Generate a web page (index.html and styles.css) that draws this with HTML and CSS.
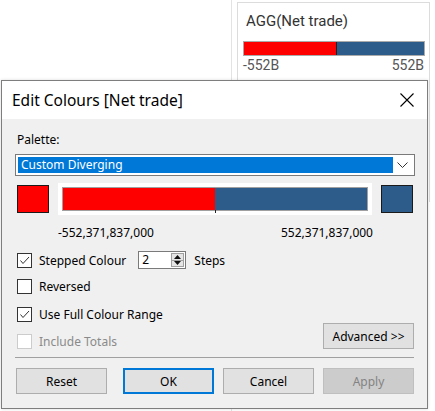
FILE: index.html
```html
<!DOCTYPE html>
<html>
<head>
<meta charset="utf-8">
<link rel="stylesheet" href="styles.css">
</head>
<body>
<div class="stage">
  <div class="left-pane"></div>
  <div class="right-pane">
    <div class="legend-card">
      <div class="legend-title">AGG(Net trade)</div>
      <div class="legend-bar"><div class="lb-red"></div><div class="lb-blue"></div></div>
      <div class="legend-labels"><span>-552B</span><span>552B</span></div>
    </div>
  </div>

  <div class="dialog">
    <div class="titlebar">
      <span class="title">Edit Colours [Net trade]</span>
      <svg class="close" width="14" height="14" viewBox="0 0 14 14"><path d="M0.5 0.5 L13.5 13.5 M13.5 0.5 L0.5 13.5" stroke="#000" stroke-width="1.1" fill="none"/></svg>
    </div>
    <div class="body">
      <div class="label-row">Palette:</div>
      <div class="select">
        <div class="select-sel">Custom Diverging</div>
        <svg class="chev" width="11" height="6" viewBox="0 0 11 6"><path d="M0.5 0.5 L5.5 5.5 L10.5 0.5" stroke="#333" stroke-width="1" fill="none"/></svg>
      </div>
      <div class="swatch-row">
        <div class="swatch red"></div>
        <div class="bar-frame">
          <div class="bar"><div class="bar-red"></div><div class="bar-blue"></div><div class="tick"></div></div>
        </div>
        <div class="swatch blue"></div>
      </div>
      <div class="range-row"><span>-552,371,837,000</span><span>552,371,837,000</span></div>
      <div class="opt-row first">
        <span class="cb checked"><svg width="13" height="13" viewBox="0 0 13 13"><path d="M2.5 6.5 L5 9.5 L11 3" stroke="#333" stroke-width="1" fill="none"/></svg></span>
        <span class="opt-text">Stepped Colour</span>
        <span class="spin"><span class="spin-val">2</span><span class="spin-btns"><span class="sb up"><svg width="7" height="4" viewBox="0 0 7 4"><path d="M0 4 L3.5 0 L7 4 Z" fill="#111"/></svg></span><span class="sb down"><svg width="7" height="4" viewBox="0 0 7 4"><path d="M0 0 L3.5 4 L7 0 Z" fill="#111"/></svg></span></span></span>
        <span class="opt-text steps">Steps</span>
      </div>
      <div class="opt-row">
        <span class="cb"></span>
        <span class="opt-text">Reversed</span>
      </div>
      <div class="opt-row full">
        <span class="cb checked"><svg width="13" height="13" viewBox="0 0 13 13"><path d="M2.5 6.5 L5 9.5 L11 3" stroke="#333" stroke-width="1" fill="none"/></svg></span>
        <span class="opt-text">Use Full Colour Range</span>
      </div>
      <div class="opt-row last">
        <span class="cb disabled"></span>
        <span class="opt-text dim">Include Totals</span>
        <span class="btn advanced">Advanced &gt;&gt;</span>
      </div>
      <div class="sep"></div>
      <div class="btn-row">
        <span class="btn">Reset</span>
        <span class="btn primary">OK</span>
        <span class="btn">Cancel</span>
        <span class="btn off">Apply</span>
      </div>
    </div>
  </div>
</div>
</body>
</html>
```
FILE: styles.css
```css
* { box-sizing: border-box; }
html, body { margin: 0; padding: 0; }
body { width: 435px; height: 411px; overflow: hidden; background: #fff; font-family: "Noto Sans", "Open Sans", sans-serif; }
.stage { position: relative; width: 435px; height: 411px; display: flex; }
.left-pane { width: 232px; height: 411px; border-right: 1px solid #e3e3e3; background: #fff; }
.right-pane { flex: 1; padding: 2px 5px 0 5px; }
.legend-card { height: 200px; border: 1px solid #dcdcdc; border-bottom: none; padding: 7px 4px 0 5px; }
.legend-title { font-family: Roboto, "Noto Sans", sans-serif; font-size: 15px; color: #333; height: 22px; line-height: 22px; padding-left: 3px; }
.legend-bar { margin-top: 9px; height: 15px; display: flex; border: 1px solid #aaa; }
.lb-red { width: 92px; background: #ff0000; }
.lb-blue { flex: 1; background: #2d5c8a; border-left: 1px solid #222; }
.legend-labels { display: flex; justify-content: space-between; font-family: Roboto, "Noto Sans", sans-serif; font-size: 14px; color: #555; line-height: 18px; padding-right: 1px; }

.dialog { position: absolute; left: 1px; top: 80px; width: 427px; height: 329px; border: 1px solid #7e7e7e; background: #f0f0f0; box-shadow: 0 0 3px rgba(0,0,0,0.15); }
.titlebar { height: 38px; background: #fff; display: flex; align-items: center; justify-content: space-between; padding: 0 13px 0 10px; }
.title { font-size: 15.5px; color: #000; }
.close { display: block; }
.body { padding: 12px 13px 0 13px; font-size: 12px; color: #000; }
.label-row { height: 17px; line-height: 17px; padding-left: 2px; }
.select { margin-top: 6px; height: 22px; border: 1px solid #7a7a7a; background: #fff; display: flex; align-items: center; padding: 2px; width: 400px; }
.select-sel { flex: 1; height: 16px; background: #0078d7; color: #fff; line-height: 16px; padding-left: 3px; margin-right: 4px; }
.chev { margin: 0 4px 0 0; }
.swatch-row { margin-top: 7px; height: 32px; display: flex; align-items: center; }
.swatch { width: 32px; height: 28px; border: 1px solid #1a1a1a; margin-left: 2px; }
.swatch.red { background: #ff0000; }
.swatch.blue { background: #2d5c8a; margin-left: 9px; }
.bar-frame { margin-left: 9px; width: 314px; height: 32px; background: #fff; padding: 4px; }
.bar { position: relative; height: 24px; display: flex; border: 1px solid #a0a0a0; }
.bar-red { width: 152px; background: #ff0000; }
.bar-blue { flex: 1; background: #2d5c8a; }
.tick { position: absolute; left: 152px; bottom: -3px; width: 1px; height: 3px; background: #222; }
.range-row { margin-top: 9px; height: 17px; line-height: 17px; display: flex; justify-content: space-between; width: 358px; padding-left: 43px; }
.opt-row { display: flex; align-items: center; height: 26px; }
.opt-row.first { margin-top: 6px; }
.opt-row.full { margin-top: 2px; }
.cb { width: 15px; height: 15px; border: 1px solid #333; background: #fff; display: flex; align-items: center; justify-content: center; margin-left: 2px; }
.cb.disabled { border-color: #cccccc; }
.opt-text { margin-left: 7px; }
.opt-text.dim { color: #8a8a8a; }
.spin { margin-left: 12px; width: 48px; height: 18px; border: 1px solid #7a7a7a; background: #fff; display: flex; }
.spin-val { flex: 1; line-height: 16px; padding-left: 3px; }
.spin-btns { width: 14px; display: flex; flex-direction: column; padding: 1px 1px 1px 0; }
.sb { flex: 1; background: #e6e6e6; border: 1px solid #a0a0a0; display: flex; align-items: center; justify-content: center; }
.sb.up { border-bottom: none; }
.steps { margin-left: 8px; }
.opt-row.last { height: 28px; }
.btn { display: flex; align-items: center; justify-content: center; width: 91px; height: 26px; background: #e1e1e1; border: 1px solid #adadad; color: #000; }
.advanced { margin-left: auto; align-self: flex-start; margin-top: -4px; }
.sep { margin-top: 2px; width: 399px; height: 1px; background: #a0a0a0; }
.btn-row { margin-top: 10px; display: flex; padding-left: 1px; }
.btn-row .btn:nth-child(2) { margin-left: 16px; }
.btn-row .btn:nth-child(3) { margin-left: 9px; }
.btn-row .btn:nth-child(4) { margin-left: 9px; }
.btn.primary { border: 2px solid #0078d7; }
.btn.off { background: #cccccc; border-color: #bfbfbf; color: #838383; }
```
